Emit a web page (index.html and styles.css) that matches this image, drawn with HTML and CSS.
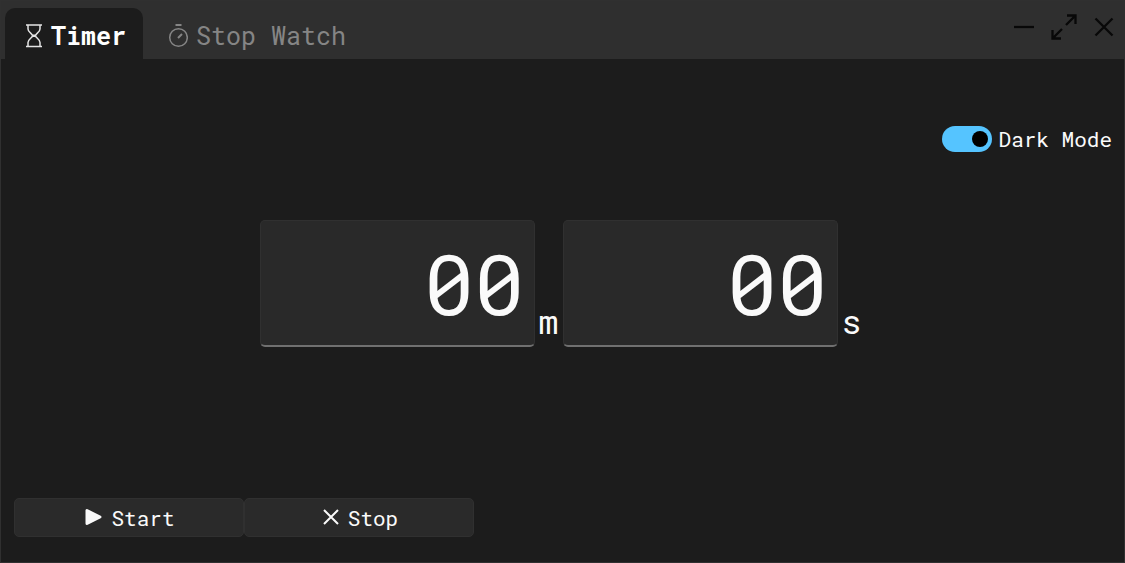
FILE: index.html
```html
<!DOCTYPE html>
<html lang="en">
<head>
<meta charset="utf-8">
<meta name="viewport" content="width=device-width, initial-scale=1">
<title>Timer</title>
<link rel="stylesheet" href="styles.css">
</head>
<body>
<div class="window">
  <header class="titlebar">
    <nav class="tabs" role="tablist" aria-label="Mode">
      <button class="tab tab-active" type="button" role="tab" aria-selected="true">
        <svg class="tab-icon" viewBox="0 0 20 26" fill="none" stroke="#e4e4e4" stroke-width="1.5" aria-hidden="true">
          <path d="M3 2h16M3 23.500h16"/>
          <path d="M5 2v4c0 3.500 4.500 4.500 4.500 6.700S5 16 5 19.500V23.500M17 2v4c0 3.500-4.500 4.500-4.500 6.700S17 16 17 19.500V23.500"/>
          <path d="M9.500 11.500h3v2.500h-3z" fill="#e4e4e4" stroke="none"/>
        </svg>
        Timer
      </button>
      <button class="tab" type="button" role="tab" aria-selected="false">
        <svg class="tab-icon" viewBox="0 0 20 26" fill="none" stroke="currentColor" stroke-width="1.5" aria-hidden="true">
          <circle cx="10.500" cy="14.500" r="8.800"/>
          <path d="M7.500 2h6M10 15l4-4" stroke-width="2"/>
        </svg>
        Stop Watch
      </button>
    </nav>
    <div class="controls">
      <button class="control" type="button" aria-label="Minimize">
        <svg viewBox="0 0 28 28" aria-hidden="true"><path d="M4 14h20"/></svg>
      </button>
      <button class="control" type="button" aria-label="Maximize">
        <svg viewBox="0 0 28 28" aria-hidden="true"><path d="M16 12l9.500-9.500M17 2.500h8.500V11M12 16l-9.500 9.500M2.500 17v8.500H11"/></svg>
      </button>
      <button class="control" type="button" aria-label="Close">
        <svg viewBox="0 0 28 28" aria-hidden="true"><path d="M5.500 5.500l17 17M22.500 5.500l-17 17"/></svg>
      </button>
    </div>
  </header>
  <main class="panel">
    <label class="theme">
      <input class="switch" type="checkbox" role="switch" checked>
      Dark Mode
    </label>
    <div class="timer">
      <input class="digits" id="minutes" type="text" inputmode="numeric" value="00">
      <label class="unit" for="minutes">m</label>
      <input class="digits" id="seconds" type="text" inputmode="numeric" value="00">
      <label class="unit" for="seconds">s</label>
    </div>
    <div class="actions">
      <button class="action" type="button">
        <svg class="action-icon" viewBox="0 0 20 20" aria-hidden="true"><path d="M4 2.500v13l13-6.500z" fill="currentColor" stroke="currentColor" stroke-width="3" stroke-linejoin="round"/></svg>
        Start
      </button>
      <button class="action" type="button">
        <svg class="action-icon" viewBox="0 0 20 20" aria-hidden="true"><path d="M4 2l14 14M18 2L4 16" fill="none" stroke="currentColor" stroke-width="2"/></svg>
        Stop
      </button>
    </div>
  </main>
</div>
</body>
</html>
```
FILE: styles.css
```css
* {
  box-sizing: border-box;
}

body {
  margin: 0;
  background: #1c1c1c;
  color: #fafafa;
  font-family: "Roboto Mono", "DejaVu Sans Mono", "Liberation Mono", monospace;
}

button,
input {
  font: inherit;
  color: inherit;
}

.window {
  display: flex;
  flex-direction: column;
  min-height: 100vh;
  border: 1px solid #303030;
}

.titlebar {
  display: flex;
  justify-content: space-between;
  background: #2f2f2f;
}

.tabs {
  display: flex;
  padding: 7px 0 0 4px;
}

.tab {
  display: flex;
  align-items: center;
  gap: 8px;
  height: 51px;
  padding: 5px 17px 0 18px;
  border: 0;
  border-radius: 10px 10px 0 0;
  background: none;
  color: #858585;
  font-size: 25px;
  line-height: 32px;
}

.tab + .tab {
  margin-left: 7px;
}

.tab-active {
  background: #1c1c1c;
  color: #fff;
  font-weight: 700;
}

.tab-icon {
  width: 20px;
  height: 26px;
}

.controls {
  display: flex;
  align-items: center;
  gap: 12px;
  padding: 0 6px 6px 0;
}

.control {
  width: 28px;
  height: 28px;
  padding: 0;
  border: 0;
  background: none;
  color: #080808;
}

.control svg {
  display: block;
  fill: none;
  stroke: currentColor;
  stroke-width: 2.3;
}

.panel {
  display: flex;
  flex: 1;
  flex-direction: column;
  justify-content: space-between;
  padding: 66px 13px 25px;
}

.theme {
  display: flex;
  align-items: center;
  align-self: flex-end;
  gap: 7px;
  margin-right: -1px;
  font-size: 21px;
  line-height: 28px;
}

.switch {
  display: flex;
  align-items: center;
  justify-content: flex-end;
  width: 50px;
  height: 26px;
  margin: 0;
  padding: 0 4px;
  border-radius: 13px;
  background: #55c4ff;
  appearance: none;
}

.switch::before {
  width: 16px;
  height: 16px;
  border-radius: 50%;
  background: #000;
  content: "";
}

.switch:not(:checked) {
  justify-content: flex-start;
}

.timer {
  display: flex;
  align-items: flex-end;
  justify-content: center;
  margin-bottom: 84px;
}

.digits {
  flex: 0 1 275px;
  min-width: 0;
  height: 127px;
  padding: 0 9px 2px;
  border: 1px solid #303030;
  border-bottom: 2px solid #707070;
  border-radius: 5px;
  background: #292929;
  font-size: 84px;
  line-height: 112px;
  text-align: right;
}

.unit {
  flex: 0 0 28px;
  padding-bottom: 4px;
  font-size: 33px;
  line-height: 44px;
  text-align: center;
}

.actions {
  display: flex;
}

.action {
  display: flex;
  flex: 0 1 230px;
  align-items: center;
  justify-content: center;
  gap: 8px;
  height: 39px;
  border: 1px solid #303030;
  border-radius: 5px;
  background: #2a2a2a;
  font-size: 21px;
  line-height: 28px;
}

.action-icon {
  width: 20px;
  height: 20px;
}
```
